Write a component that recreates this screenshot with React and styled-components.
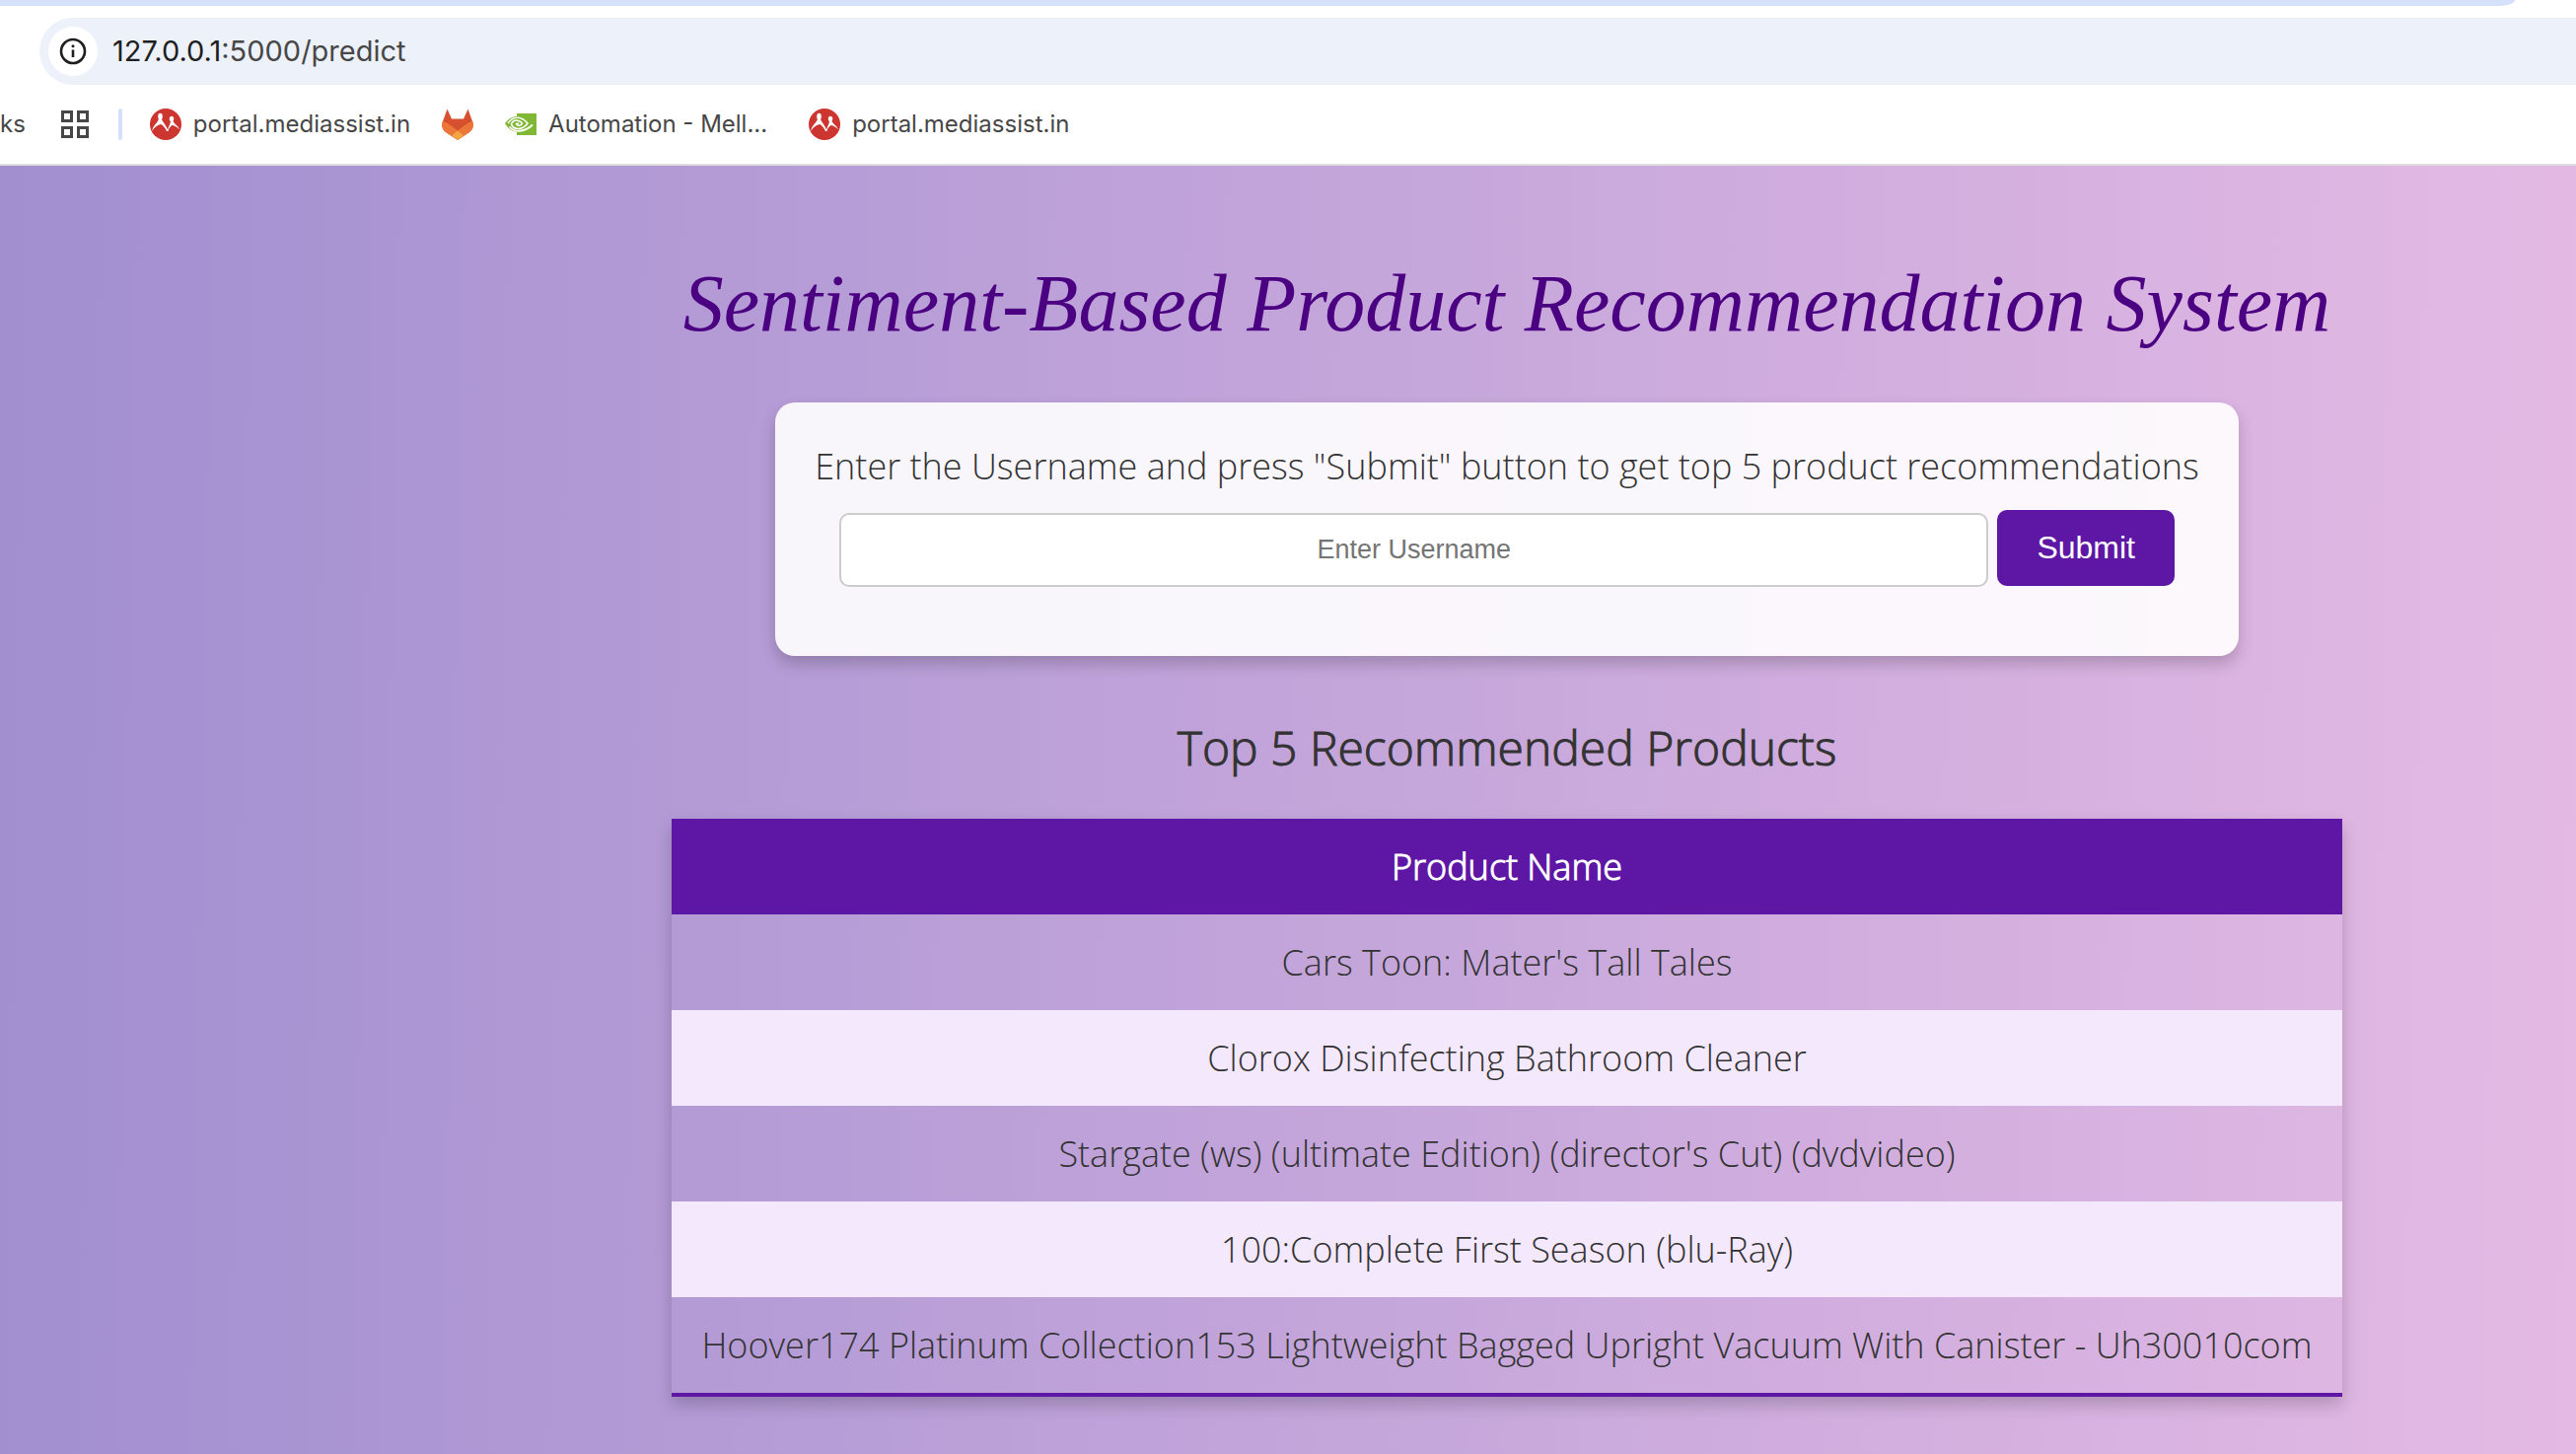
import React from "react";
import styled, { createGlobalStyle } from "styled-components";

const GlobalStyle = createGlobalStyle`
  * { box-sizing: border-box; }
  html, body, #root { margin: 0; height: 100%; }
  body { background: #fff; }
`;

const Window = styled.div`
  min-height: 100%;
  display: flex;
  flex-direction: column;
  overflow-x: hidden;
`;

const TabEdge = styled.div`
  height: 6px;
  margin-right: 62px;
  background: #d5e1fb;
  border-bottom-right-radius: 16px 6px;
`;

const AddressRow = styled.div`
  padding: 12px 0 0 40px;
`;

const AddressBar = styled.div`
  height: 68px;
  display: flex;
  align-items: center;
  gap: 15px;
  padding-left: 9px;
  background: #edf1fa;
  border-radius: 34px 0 0 34px;
`;

const InfoButton = styled.button`
  width: 50px;
  height: 50px;
  display: grid;
  place-items: center;
  padding: 0;
  border: 0;
  border-radius: 50%;
  background: #fff;
`;

const Address = styled.div`
  font: 29px/36px Inter, sans-serif;
  color: #474747;
`;

const Host = styled.span`
  color: #1f1f1f;
`;

const Bookmarks = styled.nav`
  height: 82px;
  display: flex;
  align-items: center;
  border-bottom: 2px solid #dfdfdf;
  font: 24px/32px Inter, sans-serif;
  color: #474747;
  white-space: nowrap;
`;

const Bookmark = styled.a`
  display: flex;
  align-items: center;
  gap: 12px;
  margin-right: ${(p) => p.$after || 0}px;
  color: inherit;
  text-decoration: none;
`;

const Divider = styled.span`
  width: 4px;
  height: 32px;
  margin: 0 28px 0 30px;
  border-radius: 2px;
  background: #d5e1fb;
`;

const Page = styled.main`
  flex: 1;
  padding: 76px 40px 40px 681px;
  background: linear-gradient(91deg, #a18fd0 0%, #e4bae4 100%);
  font-family: "Open Sans", sans-serif;
  font-weight: 300;
  color: #333;
`;

const Content = styled.div`
  width: fit-content;
  display: flex;
  flex-direction: column;
  align-items: center;
`;

const Title = styled.h1`
  margin: 0;
  font: italic 400 82px/128px "Liberation Serif", serif;
  color: #4b0082;
  white-space: nowrap;
`;

const Card = styled.form`
  margin-top: 36px;
  height: 257px;
  padding: 40px;
  display: flex;
  flex-direction: column;
  align-items: center;
  gap: 19px;
  border-radius: 20px;
  background: rgba(255, 255, 255, 0.9);
  box-shadow: 0 8px 16px rgba(0, 0, 0, 0.2);
`;

const Prompt = styled.label`
  font-size: 36px;
  line-height: 50px;
  white-space: nowrap;
`;

const Fields = styled.div`
  width: 1354px;
  display: flex;
  align-items: baseline;
  gap: 9px;
`;

const NameInput = styled.input`
  flex: 1;
  min-width: 0;
  height: 75px;
  border: 2px solid #ccc;
  border-radius: 10px;
  background: #fff;
  text-align: center;
  font: 27px "Liberation Sans", Arial, sans-serif;
  &::placeholder { color: #757575; }
`;

const Submit = styled.button`
  height: 77px;
  padding: 0 40px;
  border: 0;
  border-radius: 10px;
  background: #5e17a5;
  color: #fff;
  font: 32px "Liberation Sans", Arial, sans-serif;
`;

const Subtitle = styled.h2`
  margin: 58px 0 38px;
  font-size: 48px;
  line-height: 69px;
  font-weight: 300;
  -webkit-text-stroke: 1px currentColor;
`;

const Table = styled.table`
  width: 1694px;
  border-collapse: collapse;
  border-bottom: 4px solid #5e17a5;
  box-shadow: 0 8px 16px rgba(0, 0, 0, 0.2);
  font-size: 36px;
  line-height: 49px;
  text-align: center;
  white-space: nowrap;
`;

const HeadCell = styled.th`
  padding: 24px 30px;
  background: #5e17a5;
  color: #fff;
  font-weight: 300;
  -webkit-text-stroke: 1px currentColor;
`;

const Row = styled.tr`
  background: ${(p) => (p.$striped ? "#f3e8fc" : "transparent")};
`;

const Cell = styled.td`
  padding: 24px 30px;
`;

const InfoIcon = () => (
  <svg width="28" height="28" viewBox="0 0 28 28" fill="none" stroke="#1f1f1f">
    <circle cx="14" cy="14" r="12" strokeWidth="2.6" />
    <path d="M14 12.5v7.5" strokeWidth="2.6" />
    <circle cx="14" cy="8.8" r="1.5" fill="#1f1f1f" stroke="none" />
  </svg>
);

const AppsIcon = () => (
  <svg width="28" height="28" viewBox="0 0 28 28" fill="none" stroke="#474747" strokeWidth="3">
    <rect x="1.5" y="1.5" width="9" height="9" />
    <rect x="17.5" y="1.5" width="9" height="9" />
    <rect x="1.5" y="17.5" width="9" height="9" />
    <rect x="17.5" y="17.5" width="9" height="9" />
  </svg>
);

const PeopleIcon = () => (
  <svg width="32" height="32" viewBox="0 0 32 32">
    <circle cx="16" cy="16" r="16" fill="#cd3530" />
    <ellipse cx="10.5" cy="8.2" rx="2.3" ry="3.4" fill="#fff" />
    <ellipse cx="22" cy="10.5" rx="2.2" ry="2.8" fill="#fff" />
    <path d="M9 10.500H12C12 13 15.500 15 18 21.500C19 17.500 21 15.500 21 12.500H23.500C24 15.500 28.500 17 30 21.500C27.500 18.500 24.500 17 22.500 17C20.500 18.500 18.500 21 18.500 23H17C15.500 19.500 13 16.500 11 16C8 16.500 4.500 19 2 23C3 17 8.500 14 9 10.500Z" fill="#fff" />
  </svg>
);

const FoxIcon = () => (
  <svg width="32" height="32" viewBox="0 0 32 32">
    <path d="M5.500 0.500L10 10.500H22L26.500 0.500L31 13C33 18 31 21.500 28 24L16 32L4 24C1 21.500-1 18 1 13Z" fill="#d65030" />
    <path d="M0.800 13C5 14 8 16 16 22.500C24 16 27 14 31.200 13C33 18 31 21.500 28 24L16 32L4 24C1 21.500-1 18 0.800 13Z" fill="#ec7638" />
    <path d="M16 22.500L22 27.500L16 32L10 27.500Z" fill="#f2a742" />
  </svg>
);

const EyeIcon = () => (
  <svg width="32" height="22" viewBox="0 0 32 22">
    <path d="M12 0H32V22H12Z" fill="#80b735" />
    <path d="M0 10C4 5 8 3 12 3V18.500C6 18 3 15 0 10Z" fill="#80b735" />
    <path d="M3 10C5.500 6.500 8.500 4.200 12.500 4.200C17.500 4.200 20.500 7 23 10C20.500 13.500 17 15.500 13.500 15.500C9.500 15.500 7 13 6.500 10.500C8 7.500 11 6.500 14 7.500C16 8.500 17.500 9.500 17.500 10.500C15.500 13 12 12.500 11.500 10.500L14 10" fill="none" stroke="#fff" strokeWidth="1.6" />
    <path d="M4.500 13.500C9 19 19 20 28 11.500" fill="none" stroke="#fff" strokeWidth="1.8" />
  </svg>
);

const products = [
  "Cars Toon: Mater's Tall Tales",
  "Clorox Disinfecting Bathroom Cleaner",
  "Stargate (ws) (ultimate Edition) (director's Cut) (dvdvideo)",
  "100:Complete First Season (blu-Ray)",
  "Hoover174 Platinum Collection153 Lightweight Bagged Upright Vacuum With Canister - Uh30010com",
];

export default function App() {
  return (
    <Window>
      <GlobalStyle />
      <header>
        <TabEdge />
        <AddressRow>
          <AddressBar>
            <InfoButton type="button" aria-label="Site information"><InfoIcon /></InfoButton>
            <Address><Host>127.0.0.1</Host>:5000/predict</Address>
          </AddressBar>
        </AddressRow>
        <Bookmarks>
          <Bookmark href="#" $after={36}>ks</Bookmark>
          <Bookmark href="#" aria-label="Apps"><AppsIcon /></Bookmark>
          <Divider />
          <Bookmark href="#" $after={32}><PeopleIcon />portal.mediassist.in</Bookmark>
          <Bookmark href="#" $after={32} aria-label="GitLab"><FoxIcon /></Bookmark>
          <Bookmark href="#" $after={42}><EyeIcon />Automation - Mell...</Bookmark>
          <Bookmark href="#"><PeopleIcon />portal.mediassist.in</Bookmark>
        </Bookmarks>
      </header>
      <Page>
        <Content>
          <Title>Sentiment-Based Product Recommendation System</Title>
          <Card onSubmit={(e) => e.preventDefault()}>
            <Prompt htmlFor="username">
              Enter the Username and press "Submit" button to get top 5 product recommendations
            </Prompt>
            <Fields>
              <NameInput id="username" placeholder="Enter Username" />
              <Submit type="submit">Submit</Submit>
            </Fields>
          </Card>
          <Subtitle>Top 5 Recommended Products</Subtitle>
          <Table>
            <thead>
              <tr><HeadCell scope="col">Product Name</HeadCell></tr>
            </thead>
            <tbody>
              {products.map((name, i) => (
                <Row key={name} $striped={i % 2 === 1}><Cell>{name}</Cell></Row>
              ))}
            </tbody>
          </Table>
        </Content>
      </Page>
    </Window>
  );
}
